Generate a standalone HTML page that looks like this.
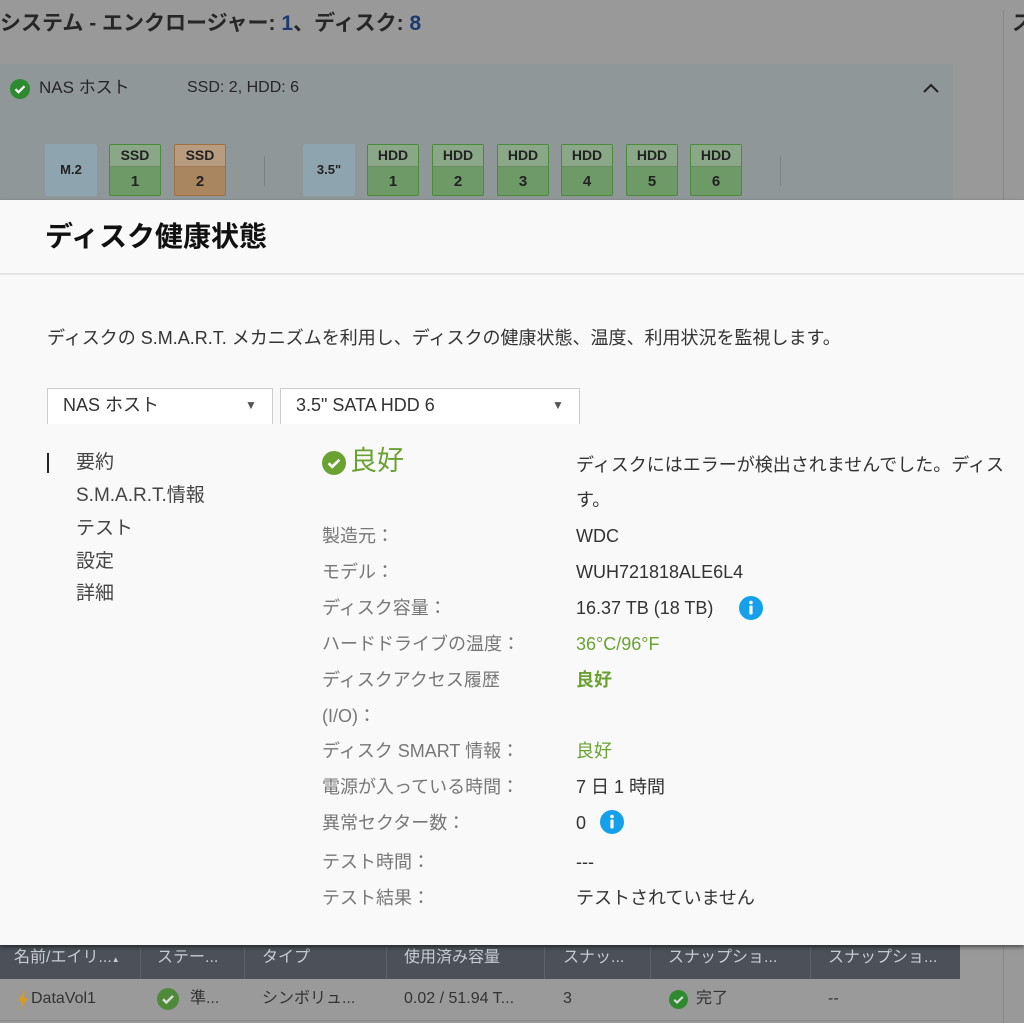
<!DOCTYPE html>
<html><head><meta charset="utf-8"><style>
*{margin:0;padding:0;box-sizing:border-box}
body{width:1024px;height:1023px;overflow:hidden;position:relative;background:#999;font-family:"Liberation Sans","Noto Sans CJK JP",sans-serif;color:#333}
.a{position:absolute;white-space:nowrap}
.bay{position:absolute;top:144px;width:52px;height:52px;border:1px solid #4a8a3a;background:#6e9a68;border-radius:2px;text-align:center;font-weight:bold;font-size:14px;color:#222}
.bay .t{height:22px;line-height:20px;background:#8aa888;border-bottom:1px solid #6a8a66}
.bay .n{line-height:30px;font-size:15px}
.lab{position:absolute;left:322px;font-size:18px;line-height:24px;color:#777;white-space:nowrap}
.val{position:absolute;left:576px;font-size:18px;line-height:24px;color:#333;white-space:nowrap}
.g{color:#6aa232}
.menu{position:absolute;left:76px;font-size:19px;line-height:24px;color:#444}
.th{position:absolute;top:948px;font-size:16px;line-height:20px;color:#c8ccd2;white-space:nowrap}
.td{position:absolute;top:989px;font-size:16px;line-height:20px;color:#333;white-space:nowrap}
</style></head><body>
<div class="a" style="left:0;top:11px;font-size:21px;line-height:26px;font-weight:bold;color:#262626">システム - エンクロージャー: <span style="color:#1c3a70">1</span>、ディスク: <span style="color:#1c3a70">8</span></div>
<div class="a" style="left:1003px;top:10px;width:1px;height:1013px;background:#888"></div>
<div class="a" style="left:1012px;top:11px;font-size:21px;line-height:26px;font-weight:bold;color:#262626">ス</div>
<div class="a" style="left:0;top:64px;width:953px;height:136px;background:#8f9799"></div>
<svg class="a" style="left:10px;top:79px" width="20" height="20" viewBox="0 0 20 20"><circle cx="10" cy="10" r="10" fill="#2e8a2e"/><path d="M5.5 10.2l3 3 6-6" stroke="#fff" stroke-width="2.2" fill="none"/></svg>
<div class="a" style="left:39px;top:77px;font-size:17px;line-height:22px;color:#262626">NAS ホスト</div>
<div class="a" style="left:187px;top:77px;font-size:16px;line-height:22px;color:#262626">SSD: 2, HDD: 6</div>
<svg class="a" style="left:922px;top:82px" width="18" height="12" viewBox="0 0 18 12"><path d="M2 10l7-7 7 7" stroke="#222" stroke-width="2" fill="none"/></svg>
<div class="bay" style="left:45px;border:none;background:#8ea4ae;line-height:52px;font-size:13px">M.2</div>
<div class="bay" style="left:109px"><div class="t">SSD</div><div class="n">1</div></div>
<div class="bay" style="left:174px;border-color:#a07040;background:#a98660"><div class="t" style="background:#b89c80;border-color:#a07a5a">SSD</div><div class="n">2</div></div>
<div class="a" style="left:264px;top:156px;width:1px;height:30px;background:#7a8284"></div>
<div class="bay" style="left:303px;border:none;background:#8ea4ae;line-height:52px;font-size:13px">3.5"</div>
<div class="bay" style="left:367px"><div class="t">HDD</div><div class="n">1</div></div>
<div class="bay" style="left:432px"><div class="t">HDD</div><div class="n">2</div></div>
<div class="bay" style="left:497px"><div class="t">HDD</div><div class="n">3</div></div>
<div class="bay" style="left:561px"><div class="t">HDD</div><div class="n">4</div></div>
<div class="bay" style="left:626px"><div class="t">HDD</div><div class="n">5</div></div>
<div class="bay" style="left:690px"><div class="t">HDD</div><div class="n">6</div></div>
<div class="a" style="left:780px;top:156px;width:1px;height:30px;background:#7a8284"></div>
<div class="a" style="left:0;top:945px;width:960px;height:34px;background:#4b5059"></div>
<div class="a" style="left:0;top:979px;width:960px;height:42px;background:#9a9a9a;border-bottom:1px solid #888"></div>
<div class="th" style="left:14px">名前/エイリ...<span style="font-size:8px">▲</span></div>
<div class="th" style="left:157px">ステー...</div>
<div class="th" style="left:262px">タイプ</div>
<div class="th" style="left:404px">使用済み容量</div>
<div class="th" style="left:563px">スナッ...</div>
<div class="th" style="left:668px">スナップショ...</div>
<div class="th" style="left:828px">スナップショ...</div>
<div class="a" style="left:140px;top:947px;width:1px;height:32px;background:#5c626b"></div>
<div class="a" style="left:244px;top:947px;width:1px;height:32px;background:#5c626b"></div>
<div class="a" style="left:386px;top:947px;width:1px;height:32px;background:#5c626b"></div>
<div class="a" style="left:544px;top:947px;width:1px;height:32px;background:#5c626b"></div>
<div class="a" style="left:650px;top:947px;width:1px;height:32px;background:#5c626b"></div>
<div class="a" style="left:810px;top:947px;width:1px;height:32px;background:#5c626b"></div>
<svg class="a" style="left:17px;top:990px" width="12" height="20" viewBox="0 0 12 20"><path d="M8 0L1 11h4l-2 9 8-12H7z" fill="#d89a20"/></svg>
<div class="td" style="left:31px">DataVol1</div>
<svg class="a" style="left:157px;top:988px" width="22" height="22" viewBox="0 0 20 20"><circle cx="10" cy="10" r="10" fill="#4e8a3a"/><path d="M5.5 10.2l3 3 6-6" stroke="#ddd" stroke-width="2.2" fill="none"/></svg>
<div class="td" style="left:190px">準...</div>
<div class="td" style="left:262px">シンボリュ...</div>
<div class="td" style="left:404px">0.02 / 51.94 T...</div>
<div class="td" style="left:563px">3</div>
<svg class="a" style="left:669px;top:990px" width="19" height="19" viewBox="0 0 20 20"><circle cx="10" cy="10" r="10" fill="#2e8a2e"/><path d="M5.5 10.2l3 3 6-6" stroke="#ddd" stroke-width="2.2" fill="none"/></svg>
<div class="td" style="left:696px">完了</div>
<div class="td" style="left:828px">--</div>
<div class="a" style="left:0;top:200px;width:1024px;height:745px;background:#f9f9f9;box-shadow:0 2px 4px rgba(0,0,0,.5)"></div>
<div class="a" style="left:0;top:273px;width:1024px;height:2px;background:#e4e4e4"></div>
<div class="a" style="left:45px;top:220px;font-size:28px;line-height:34px;font-weight:bold;color:#111">ディスク健康状態</div>
<div class="a" style="left:47px;top:326px;font-size:18px;line-height:24px;color:#333">ディスクの S.M.A.R.T. メカニズムを利用し、ディスクの健康状態、温度、利用状況を監視します。</div>
<div class="a" style="left:47px;top:388px;width:226px;height:36px;background:#fff;border:1px solid #ccc;border-bottom:none"></div>
<div class="a" style="left:63px;top:393px;font-size:18px;line-height:24px">NAS ホスト</div>
<div class="a" style="left:245px;top:397px;font-size:12px;line-height:16px;color:#555">▼</div>
<div class="a" style="left:280px;top:388px;width:300px;height:36px;background:#fff;border:1px solid #ccc;border-bottom:none"></div>
<div class="a" style="left:296px;top:393px;font-size:18px;line-height:24px">3.5" SATA HDD 6</div>
<div class="a" style="left:552px;top:397px;font-size:12px;line-height:16px;color:#555">▼</div>
<div class="a" style="left:47px;top:453px;width:2px;height:20px;background:#222"></div>
<div class="menu" style="top:451px">要約</div>
<div class="menu" style="top:484px">S.M.A.R.T.情報</div>
<div class="menu" style="top:517px">テスト</div>
<div class="menu" style="top:550px">設定</div>
<div class="menu" style="top:582px">詳細</div>
<svg class="a" style="left:322px;top:451px" width="24" height="24" viewBox="0 0 20 20"><circle cx="10" cy="10" r="10" fill="#6aa232"/><path d="M5.5 10.2l3 3 6-6" stroke="#fff" stroke-width="2.2" fill="none"/></svg>
<div class="a g" style="left:350px;top:444px;font-size:27px;line-height:34px">良好</div>
<div class="val" style="top:453px">ディスクにはエラーが検出されませんでした。ディス</div>
<div class="val" style="top:488px">す。</div>
<div class="lab" style="top:524px">製造元：</div><div class="val" style="top:524px">WDC</div>
<div class="lab" style="top:560px">モデル：</div><div class="val" style="top:560px">WUH721818ALE6L4</div>
<div class="lab" style="top:596px">ディスク容量：</div><div class="val" style="top:596px">16.37 TB (18 TB)</div>
<svg class="a" style="left:739px;top:596px" width="24" height="24" viewBox="0 0 24 24"><circle cx="12" cy="12" r="12" fill="#14a0ea"/><circle cx="12" cy="6.5" r="1.8" fill="#fff"/><rect x="10.4" y="9.5" width="3.2" height="9" rx="1" fill="#fff"/></svg>
<div class="lab" style="top:632px">ハードドライブの温度：</div><div class="val g" style="top:632px">36°C/96°F</div>
<div class="lab" style="top:668px">ディスクアクセス履歴</div><div class="val g" style="top:668px;font-weight:bold">良好</div>
<div class="lab" style="top:704px">(I/O)：</div>
<div class="lab" style="top:739px">ディスク SMART 情報：</div><div class="val g" style="top:739px">良好</div>
<div class="lab" style="top:775px">電源が入っている時間：</div><div class="val" style="top:775px">7 日 1 時間</div>
<div class="lab" style="top:811px">異常セクター数：</div><div class="val" style="top:811px">0</div>
<svg class="a" style="left:600px;top:810px" width="24" height="24" viewBox="0 0 24 24"><circle cx="12" cy="12" r="12" fill="#14a0ea"/><circle cx="12" cy="6.5" r="1.8" fill="#fff"/><rect x="10.4" y="9.5" width="3.2" height="9" rx="1" fill="#fff"/></svg>
<div class="lab" style="top:850px">テスト時間：</div><div class="val" style="top:850px">---</div>
<div class="lab" style="top:886px">テスト結果：</div><div class="val" style="top:886px">テストされていません</div>
</body></html>
